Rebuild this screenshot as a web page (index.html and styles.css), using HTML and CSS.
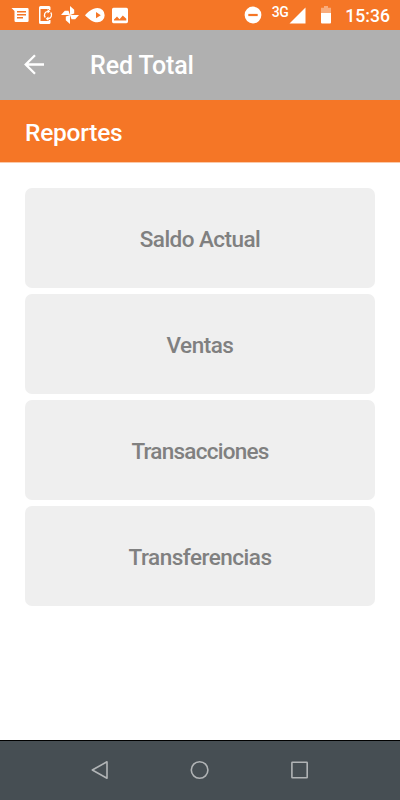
FILE: index.html
```html
<!DOCTYPE html>
<html lang="es">
<head>
<meta charset="utf-8">
<title>Red Total</title>
<link rel="stylesheet" href="styles.css">
</head>
<body>
<header class="status">
  <div class="notifications">
    <svg width="20" height="20" viewBox="0 0 20 20"><path fill="#fff" fill-rule="evenodd" d="M1.500 3H17.300A1.300 1.300 0 0 1 18.600 4.300V15.700A1.300 1.300 0 0 1 17.300 17H5.800A1.300 1.300 0 0 1 4.500 15.700V6zM7 6v1.500h9V6zm0 3v1.500h9V9zm0 3v1.500h6V12z"/></svg>
    <svg width="20" height="20" viewBox="0 0 20 20"><path fill="#fff" fill-rule="evenodd" d="M5.500 1H14a1.500 1.500 0 0 1 1.500 1.500V5H14V4H5.500v12H14v-1h1.500v2.500A1.500 1.500 0 0 1 14 19H5.500A1.500 1.500 0 0 1 4 17.500v-15A1.500 1.500 0 0 1 5.500 1z"/><path fill="none" stroke="#fff" stroke-width="1.300" d="M10.300 12.500A3.800 3.800 0 0 1 13 6.300M15.700 7.500A3.800 3.800 0 0 1 13 13.700"/><path fill="#fff" d="m12.600 4.100 2.700 2.200-2.700 2.200zM13.400 11.500l-2.700 2.200 2.700 2.200z"/></svg>
    <svg width="20" height="20" viewBox="0 0 20 20"><path fill="#fff" d="M10 10V1l4.200 3.800V8.500L10 10h9l-3.800 4.200h-3.700L10 10v9l-4.200-3.800v-3.700L10 10H1l3.800-4.200h3.700z"/></svg>
    <svg width="20" height="20" viewBox="0 0 20 20"><path fill="#fff" fill-rule="evenodd" d="M0 10.200C3 7.200 7.300 3 12.500 3a7 7 0 0 1 0 14.300C7.300 17.300 3 13.200 0 10.200zM11 7v6.300l4.800-3.100z"/></svg>
    <svg width="20" height="20" viewBox="0 0 20 20"><path fill="#fff" fill-rule="evenodd" d="M3.500 2.700h12.700A1.700 1.700 0 0 1 18 4.400v12.200a1.700 1.700 0 0 1-1.800 1.700H3.500A1.700 1.700 0 0 1 2 16.600V4.400a1.700 1.700 0 0 1 1.500-1.700zM4 15.500h12.300v-1.800L12.800 10.500l-3.300 3.700L7 11.500l-3 3z"/></svg>
  </div>
  <div class="system">
    <svg width="18" height="18" viewBox="0 0 18 18"><circle cx="9" cy="9" r="8.400" fill="#fff"/><path stroke="#f57626" stroke-width="2.200" d="M4.300 9h9.400"/></svg>
    <span class="network">3G</span>
    <svg class="signal" width="17" height="17" viewBox="0 0 17 17"><path fill="#fff" d="M16.500.5v16H.5z"/></svg>
    <svg class="battery" width="10" height="18" viewBox="0 0 10 18"><path fill="#fff" fill-opacity=".4" d="M3 0h4v1.800h3V7H0V1.800h3z"/><path fill="#fff" d="M0 7h10v9.500a1 1 0 0 1-1 1H1a1 1 0 0 1-1-1z"/></svg>
    <span class="clock">15:36</span>
  </div>
</header>
<div class="appbar">
  <svg class="back" width="22" height="22" viewBox="0 0 22 22"><path fill="none" stroke="#fff" stroke-width="2.300" d="M20 10.500H2M11 1.300 1.700 10.500l9.300 9.200"/></svg>
  <h1 class="app-title">Red Total</h1>
</div>
<h2 class="section">Reportes</h2>
<main class="menu">
  <button class="item saldo">Saldo Actual</button>
  <button class="item ventas">Ventas</button>
  <button class="item transacciones">Transacciones</button>
  <button class="item transferencias">Transferencias</button>
</main>
<nav class="navbar">
  <svg width="20" height="20" viewBox="0 0 20 20"><path d="M17 1.800v16.400L2.300 10z"/></svg>
  <svg width="20" height="20" viewBox="0 0 20 20"><circle cx="9.600" cy="10" r="8.300"/></svg>
  <svg width="20" height="20" viewBox="0 0 20 20"><rect x="1.900" y="2.300" width="15.300" height="15.500" rx=".5"/></svg>
</nav>
</body>
</html>
```
FILE: styles.css
```css
* { box-sizing: border-box; }
body {
  margin: 0;
  height: 800px;
  display: flex;
  flex-direction: column;
  background: #fff;
  font-family: Roboto, sans-serif;
  overflow: hidden;
}
svg { display: block; flex: none; }
.status {
  height: 30px;
  background: #f57626;
  color: #fff;
  display: flex;
  justify-content: space-between;
  align-items: center;
  padding: 0 10px;
}
.notifications { display: flex; gap: 5px; }
.system { display: flex; align-items: center; }
.network { font-size: 14px; font-weight: 500; line-height: 16px; letter-spacing: -.4px; margin: -6px 1px 0 10px; }
.battery { margin: 0 14px 0 15px; }
.clock { font-size: 17.600px; font-weight: 500; line-height: 20px; padding-top: 1px; }
.appbar {
  height: 70px;
  background: #b0b0b0;
  color: #fff;
  display: flex;
  align-items: center;
  padding: 0 24px;
}
.app-title { margin: 2px 0 0 44px; font-size: 25px; font-weight: 500; line-height: 30px; letter-spacing: -.1px; }
.section {
  height: 62px;
  margin: 0;
  padding: 2px 25px 0;
  background: #f57626;
  box-shadow: 0 1px 0 #fbc9a8;
  color: #fff;
  font-size: 24.500px;
  font-weight: 500;
  line-height: 62px;
  letter-spacing: -.25px;
}
.menu {
  flex: 1;
  display: flex;
  flex-direction: column;
  gap: 6px;
  padding: 26px 25px 0;
}
.item {
  height: 100px;
  border: 0;
  border-radius: 7px;
  background: #efefef;
  color: #808080;
  font: 500 22.500px/30px Roboto, sans-serif;
  padding: 1px 0 0;
}
.saldo { letter-spacing: -.55px; }
.ventas { letter-spacing: -.5px; }
.transacciones { letter-spacing: -.75px; }
.transferencias { letter-spacing: -.5px; }
.navbar {
  height: 60px;
  padding-bottom: 2px;
  border-top: 1px solid #000;
  background: #464e53;
  display: flex;
  justify-content: center;
  align-items: center;
  gap: 80px;
  fill: none;
  stroke: #b1b4b6;
  stroke-width: 1.600;
  stroke-linejoin: round;
}
```
